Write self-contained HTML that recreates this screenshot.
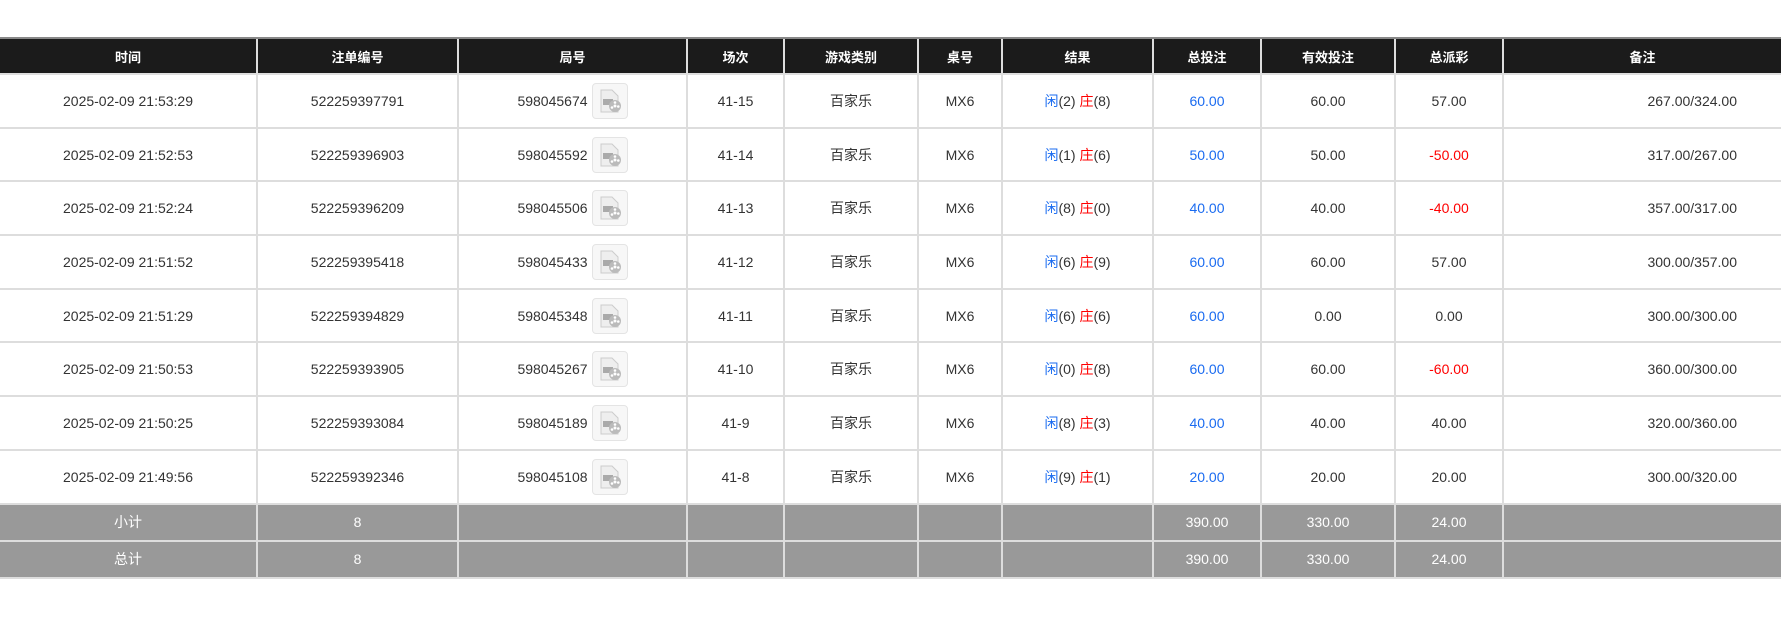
<!DOCTYPE html>
<html><head><meta charset="utf-8"><style>
body{margin:0;background:#fff;font-family:"Liberation Sans","Noto Sans CJK SC",sans-serif;font-size:14px;color:#333;}
table{position:absolute;top:37px;left:0;width:1781px;border-collapse:collapse;table-layout:fixed;}
th{background:#1b1b1b;color:#fff;font-weight:bold;height:34px;border-left:2px solid #ddd;border-top:2px solid #888;padding:0;font-size:13px}
td{text-align:center;border:2px solid #ddd;height:51.7px;padding:0;vertical-align:middle}
tr.f td{background:#999;color:#fff;height:35px;border-color:#ddd}
td.r{text-align:right;padding-right:44px}
.b{color:#1a6bf0}.red{color:#f00}
.n{vertical-align:middle}
.ic{display:inline-block;width:34px;height:34px;border:1px solid #e4e4e4;border-radius:4px;background:#f7f7f7;vertical-align:middle;margin-left:4px;position:relative}
.ic svg{position:absolute;left:3px;top:3px}
</style></head><body>
<table>
<colgroup><col style="width:257px"><col style="width:201px"><col style="width:229px"><col style="width:97px"><col style="width:134px"><col style="width:84px"><col style="width:151px"><col style="width:108px"><col style="width:134px"><col style="width:108px"><col style="width:278px"></colgroup>
<tr><th style="border-left:none">时间</th><th>注单编号</th><th>局号</th><th>场次</th><th>游戏类别</th><th>桌号</th><th>结果</th><th>总投注</th><th>有效投注</th><th>总派彩</th><th>备注</th></tr>
<tbody id="b"></tbody>
</table>
<script>
var d=[["2025-02-09 21:53:29","522259397791","598045674","41-15","2","8","60.00","60.00","57.00","267.00/324.00"],
["2025-02-09 21:52:53","522259396903","598045592","41-14","1","6","50.00","50.00","-50.00","317.00/267.00"],
["2025-02-09 21:52:24","522259396209","598045506","41-13","8","0","40.00","40.00","-40.00","357.00/317.00"],
["2025-02-09 21:51:52","522259395418","598045433","41-12","6","9","60.00","60.00","57.00","300.00/357.00"],
["2025-02-09 21:51:29","522259394829","598045348","41-11","6","6","60.00","0.00","0.00","300.00/300.00"],
["2025-02-09 21:50:53","522259393905","598045267","41-10","0","8","60.00","60.00","-60.00","360.00/300.00"],
["2025-02-09 21:50:25","522259393084","598045189","41-9","8","3","40.00","40.00","40.00","320.00/360.00"],
["2025-02-09 21:49:56","522259392346","598045108","41-8","9","1","20.00","20.00","20.00","300.00/320.00"]];
var ic='<span class="ic"><svg width="28" height="28" viewBox="0 0 28 28"><path d="M5 3h11l6 6v16H5z" fill="#eee" stroke="#ccc"/><rect x="7" y="12" width="10" height="6" fill="#aaa"/><circle cx="19" cy="19" r="6" fill="#bbb"/><circle cx="19" cy="19" r="1.5" fill="#fff"/><circle cx="19" cy="15.5" r="1.3" fill="#fff"/><circle cx="22.3" cy="19.5" r="1.3" fill="#fff"/><circle cx="16" cy="20.5" r="1.3" fill="#fff"/></svg></span>';
var h='';d.forEach(function(r){h+='<tr><td style="border-left:none">'+r[0]+'</td><td>'+r[1]+'</td><td><span class="n">'+r[2]+'</span>'+ic+'</td><td>'+r[3]+'</td><td>百家乐</td><td>MX6</td><td><span class="b">闲</span>('+r[4]+') <span class="red">庄</span>('+r[5]+')</td><td class="b">'+r[6]+'</td><td>'+r[7]+'</td><td'+(r[8][0]=='-'?' class="red"':'')+'>'+r[8]+'</td><td class="r" style="border-right:none">'+r[9]+'</td></tr>';});
h+='<tr class="f"><td style="border-left:none">小计</td><td>8</td><td></td><td></td><td></td><td></td><td></td><td>390.00</td><td>330.00</td><td>24.00</td><td style="border-right:none"></td></tr>';
h+='<tr class="f"><td style="border-left:none">总计</td><td>8</td><td></td><td></td><td></td><td></td><td></td><td>390.00</td><td>330.00</td><td>24.00</td><td style="border-right:none"></td></tr>';
document.getElementById('b').innerHTML=h;
</script>
</body></html>
